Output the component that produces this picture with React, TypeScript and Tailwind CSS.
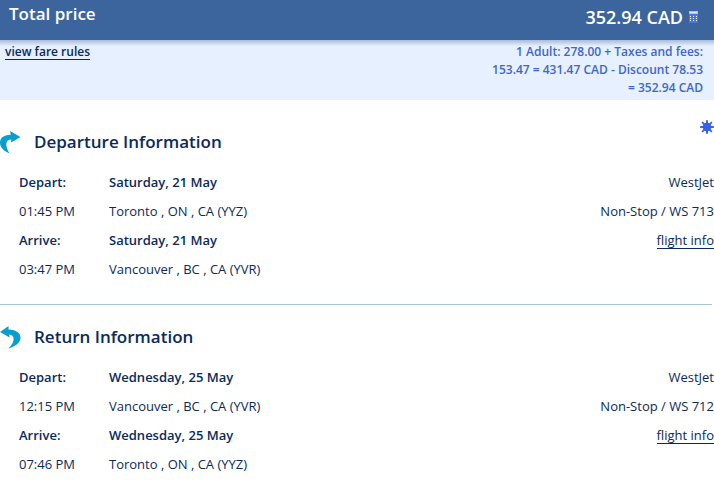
const flights = [
  {
    id: "departure",
    title: "Departure Information",
    airline: "WestJet",
    flight: "Non-Stop / WS 713",
    depart: { date: "Saturday, 21 May", time: "01:45 PM", place: "Toronto , ON , CA (YYZ)" },
    arrive: { date: "Saturday, 21 May", time: "03:47 PM", place: "Vancouver , BC , CA (YVR)" },
  },
  {
    id: "return",
    title: "Return Information",
    airline: "WestJet",
    flight: "Non-Stop / WS 712",
    depart: { date: "Wednesday, 25 May", time: "12:15 PM", place: "Vancouver , BC , CA (YVR)" },
    arrive: { date: "Wednesday, 25 May", time: "07:46 PM", place: "Toronto , ON , CA (YYZ)" },
  },
];

type Flight = (typeof flights)[number];

function DepartureArrow() {
  return (
    <svg width="21" height="23" viewBox="0 0 21 23" className="shrink-0" aria-hidden="true">
      <path
        d="M10 0 L20.500 6 L11 11.500 L11.300 8.500 C5.500 8.500 4.500 14 9.500 22.500 C3 19.500 0 16 0 11.500 C0 6.500 4.500 4 10.800 3.800 Z"
        fill="#089fd0"
      />
    </svg>
  );
}

function ReturnArrow() {
  return (
    <svg width="21" height="23" viewBox="0 0 21 23" className="shrink-0" aria-hidden="true">
      <path
        d="M8.500 0 L0 6 L9.500 11.500 L9.200 8.500 C14.500 9 16 15 8.500 22.500 C17 20 20.500 16 20.500 11.500 C20.500 6.500 15 3.800 8.500 3.600 Z"
        fill="#089fd0"
      />
    </svg>
  );
}

function CalculatorIcon() {
  return (
    <svg width="9" height="12" viewBox="0 0 9 12" aria-hidden="true">
      <rect width="9" height="12" fill="#4a74e8" />
      <rect width="9" height="3" fill="#a9c0f5" />
      <rect x="1" y="1" width="7" height="1" fill="#dce6ff" />
      {[5, 7, 9].map((y) =>
        [1, 4, 7].map((x) => <rect key={`${x}-${y}`} x={x} y={y} width="1" height="1" fill="#ffffff" />)
      )}
    </svg>
  );
}

function SunIcon() {
  return (
    <svg width="14" height="14" viewBox="0 0 14 14" className="shrink-0" aria-hidden="true">
      <circle cx="7" cy="7" r="4.200" fill="#3560ea" />
      {[0, 45, 90, 135, 180, 225, 270, 315].map((angle) => (
        <path key={angle} d="M5.800 3.500 L6.300 0 L7.700 0 L8.200 3.500 Z" fill="#3560ea" transform={`rotate(${angle} 7 7)`} />
      ))}
    </svg>
  );
}

function FlightSection({ flight }: { flight: Flight }) {
  return (
    <section>
      <h2 className="flex h-8 items-center gap-[13px] text-[17px] font-semibold">
        {flight.id === "departure" ? <DepartureArrow /> : <ReturnArrow />}
        {flight.title}
      </h2>
      <table className="mt-[9px] w-full text-left text-[13px] leading-5">
        <tbody>
          <tr className="h-[29px]">
            <th className="w-[109px] pl-[19px] font-semibold">Depart:</th>
            <td className="font-semibold">{flight.depart.date}</td>
            <td className="text-right">{flight.airline}</td>
          </tr>
          <tr className="h-[29px]">
            <td className="pl-[19px]">{flight.depart.time}</td>
            <td>{flight.depart.place}</td>
            <td className="text-right">{flight.flight}</td>
          </tr>
          <tr className="h-[29px]">
            <th className="pl-[19px] font-semibold">Arrive:</th>
            <td className="font-semibold">{flight.arrive.date}</td>
            <td className="text-right">
              <a href="#flight-info" className="inline-block border-b border-[#0a2a5c] leading-4">
                flight info
              </a>
            </td>
          </tr>
          <tr className="h-[29px]">
            <td className="pl-[19px]">{flight.arrive.time}</td>
            <td>{flight.arrive.place}</td>
            <td />
          </tr>
        </tbody>
      </table>
    </section>
  );
}

export default function App() {
  return (
    <main className="bg-white font-['Trebuchet_MS','Open_Sans',sans-serif] text-xs text-[#0a2a5c]">
      <header className="flex h-10 items-start justify-between bg-[#3c659e] pr-4 pl-[9px] text-white">
        <h1 className="text-[17px] leading-7 font-semibold">Total price</h1>
        <div className="flex items-center gap-[6px] pt-[3px]">
          <span className="text-lg leading-7 font-semibold">352.94 CAD</span>
          <CalculatorIcon />
        </div>
      </header>

      <div className="flex h-[60px] items-start justify-between bg-linear-to-b from-[#a9bbd8] to-[#e6f0fe] to-[6px] pt-[3px] pr-[11px] pl-[5px] leading-[18px] font-semibold">
        <a href="#fare-rules" className="mt-px border-b border-[#0a2a5c] leading-[15px]">
          view fare rules
        </a>
        <p className="w-[220px] text-right text-[#3f67c8]">
          1 Adult: 278.00 + Taxes and fees: 153.47 = 431.47 CAD - Discount 78.53 = 352.94 CAD
        </p>
      </div>

      <div className="flex h-[26px] items-start justify-end pt-5">
        <SunIcon />
      </div>
      <FlightSection flight={flights[0]} />
      <hr className="mt-[21px] mr-[2px] mb-4 border-[#a8c3d8]" />
      <FlightSection flight={flights[1]} />
    </main>
  );
}
